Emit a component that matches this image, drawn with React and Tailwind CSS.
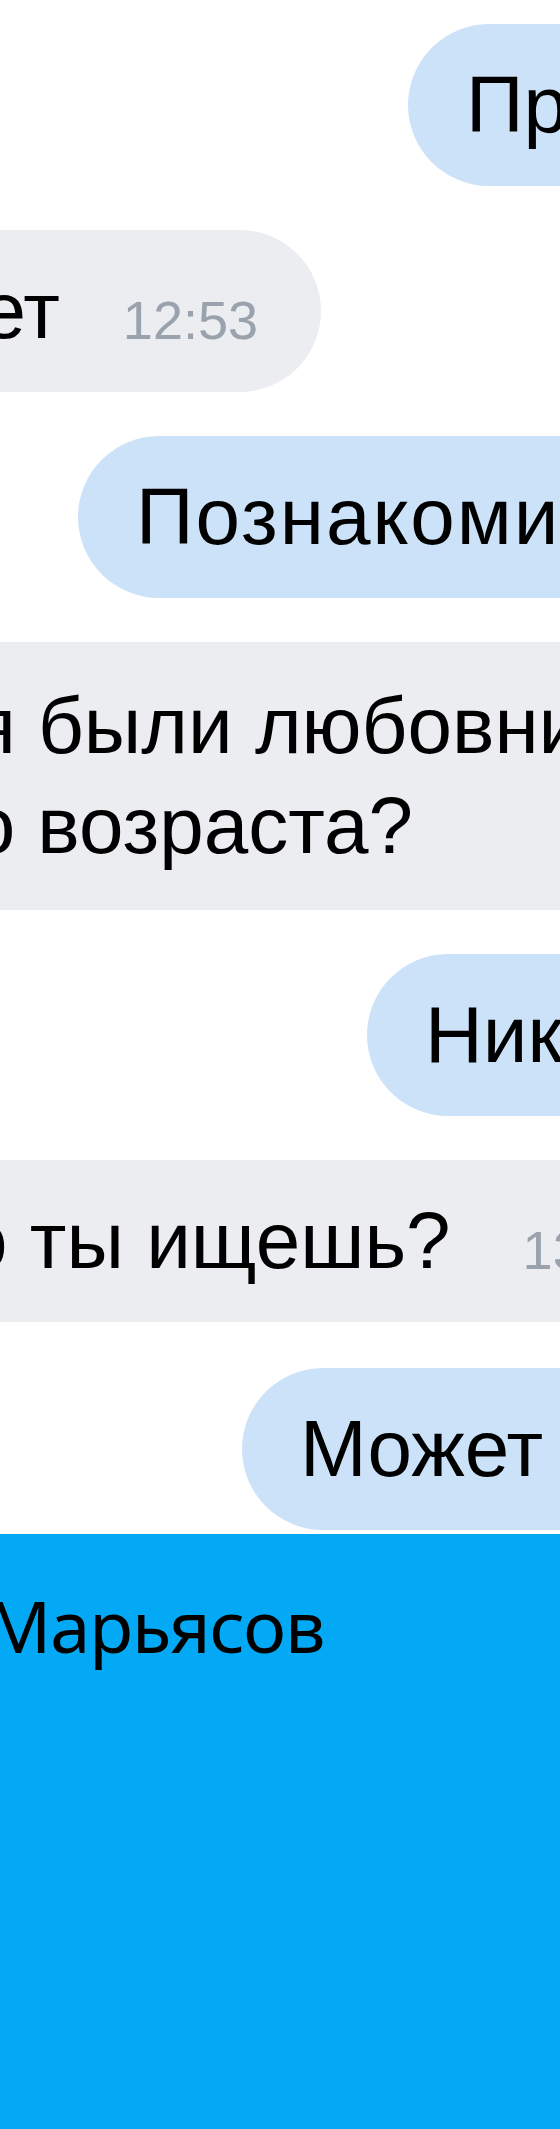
import React from "react";

const sans = { fontFamily: '"Liberation Sans", Arial, sans-serif' };

const Out = ({ text, className = "" }) => (
  <div className="flex">
    <div className={`flex shrink-0 items-center whitespace-nowrap rounded-full bg-[#cce2f8] pl-[58px] pr-[90px] text-[80px] leading-none text-black h-[162px] ${className}`}>
      {text}
    </div>
  </div>
);

export default function App() {
  return (
    <div className="flex h-[2129px] w-[560px] flex-col overflow-hidden bg-white" style={sans}>
      <div className="flex flex-col gap-[44px] pt-[24px]">
        <Out text="Привет" className="ml-[408px]" />

        {/* reply with time */}
        <div className="flex w-[321px] justify-end">
          <div className="flex h-[162px] shrink-0 items-center whitespace-nowrap rounded-full bg-[#ebedf0] pl-[58px] pr-[63px]">
            <span className="text-[80px] leading-none text-black">Привет</span>
            <span className="ml-[63px] mt-[18px] text-[54px] leading-none text-[#99a2ad]">12:53</span>
          </div>
        </div>

        <Out text="Познакомимся?" className="ml-[78px] tracking-[2px]" />

        <div className="flex">
          <div className="-ml-[224px] flex h-[268px] shrink-0 flex-col justify-center whitespace-nowrap rounded-[80px] bg-[#ebedf0] pr-[120px] text-[80px] leading-[100px] text-black">
            <span>У тебя были любовницы</span>
            <span>твоего возраста?</span>
          </div>
        </div>

        <Out text="Никогда" className="ml-[367px]" />

        <div className="flex">
          <div className="-ml-[126px] flex h-[162px] shrink-0 items-center whitespace-nowrap rounded-full bg-[#ebedf0] pr-[63px]">
            <span className="text-[80px] leading-none text-black">Что ты ищешь?</span>
            <span className="ml-[72px] mt-[18px] text-[54px] leading-none text-[#99a2ad]">13:01</span>
          </div>
        </div>

        <div className="mt-[2px]">
          <Out text="Может быть" className="ml-[242px]" />
        </div>
      </div>

      <div className="mt-[4px] flex-1 bg-[#03a9f4] pt-[41px]">
        <div className="-ml-[14px] whitespace-nowrap text-[72px] leading-[100px] tracking-[-1px] text-black" style={{ fontFamily: '"Noto Sans", "Open Sans", sans-serif' }}>
          Марьясов
        </div>
      </div>
    </div>
  );
}
